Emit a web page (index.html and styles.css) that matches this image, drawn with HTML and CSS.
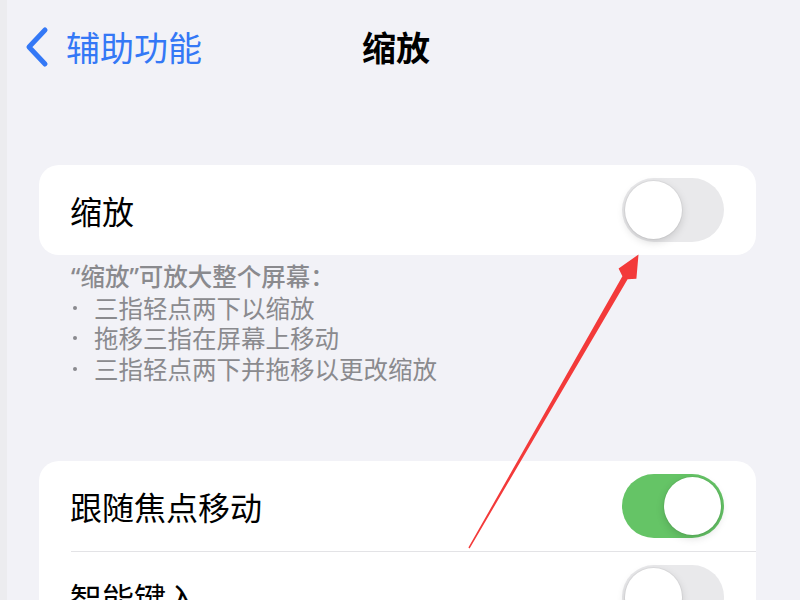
FILE: index.html
```html
<!DOCTYPE html>
<html lang="zh-CN">
<head>
    <meta charset="UTF-8">
    <meta name="viewport" content="width=device-width, initial-scale=1.0">
    <title>缩放</title>
    <link rel="stylesheet" href="styles.css">
</head>
<body>

    <div class="screen">
        <div class="nav">
            <a class="back">
                <svg class="chevron" width="26" height="42" viewBox="0 0 26 42">
                    <path d="M21 4 L5 21 L21 38" fill="none" stroke="#3478f6" stroke-width="5" stroke-linecap="round" stroke-linejoin="round"/>
                </svg>
                <span>辅助功能</span>
            </a>
            <h1 class="title">缩放</h1>
            <div></div>
        </div>

        <div class="card first">
            <div class="row">
                <span class="label">缩放</span>
                <div class="toggle"><div class="knob"></div></div>
            </div>
        </div>

        <div class="footnote">
            <p class="lead">“缩放”可放大整个屏幕：</p>
            <ul class="list">
                <li>三指轻点两下以缩放</li>
                <li>拖移三指在屏幕上移动</li>
                <li>三指轻点两下并拖移以更改缩放</li>
            </ul>
        </div>

        <div class="card second">
            <div class="row">
                <span class="label">跟随焦点移动</span>
                <div class="toggle on"><div class="knob"></div></div>
            </div>
            <div class="divider"></div>
            <div class="row">
                <span class="label">智能键入</span>
                <div class="toggle"><div class="knob"></div></div>
            </div>
        </div>

        <!-- annotation arrow drawn over the screenshot -->
        <svg class="arrow" width="800" height="600" viewBox="0 0 800 600">
            <polygon points="468.4,547.6 622.4,276.3 618.6,268.4 638.5,254.5 636.4,278.7 627.6,279.3 469.6,548.4" fill="#f33a3a"/>
        </svg>
    </div>

</body>
</html>
```

FILE: styles.css
```css
:root {
    --background: #f2f2f7;
    --surface: #ffffff;
    --blue: #3478f6;
    --green: #65c466;
    --track: #e9e9eb;
    --text-dark: #000000;
    --text-muted: #8a8a8e;
    --divider: #e3e3e6;
}

* {
    box-sizing: border-box;
    margin: 0;
    padding: 0;
}

body {
    font-family: "Noto Sans CJK SC", "Noto Sans", sans-serif;
    background-color: var(--background);
    color: var(--text-dark);
    width: 800px;
    height: 600px;
    overflow: hidden;
}

.screen {
    position: relative;
    height: 600px;
    border-left: 7px solid #ececef;
}

.nav {
    height: 94px;
    display: grid;
    grid-template-columns: 1fr auto 1fr;
    align-items: center;
}

.back {
    display: flex;
    align-items: center;
    gap: 16px;
    padding-left: 17px;
    color: var(--blue);
    font-size: 34px;
    line-height: 1;
}

.title {
    font-size: 34px;
    font-weight: 700;
    line-height: 1;
    margin-left: -15px;
}

.card {
    background: var(--surface);
    border-radius: 20px;
    margin: 0 44px 0 32px;
    overflow: hidden;
}

.card.first {
    margin-top: 71px;
}

.card.second {
    margin-top: 77px;
}

.row {
    height: 90px;
    display: flex;
    align-items: center;
    justify-content: space-between;
    padding: 0 32px 0 31px;
}

.label {
    font-size: 32px;
    line-height: 1;
}

.divider {
    height: 1px;
    background: var(--divider);
    margin-left: 32px;
}

.toggle {
    width: 102px;
    height: 64px;
    border-radius: 32px;
    background: var(--track);
    padding: 3px;
    display: flex;
    align-items: center;
}

.toggle.on {
    background: var(--green);
    justify-content: flex-end;
}

.knob {
    width: 57px;
    height: 58px;
    border-radius: 50%;
    background: var(--surface);
    box-shadow: 0 3px 8px rgba(0, 0, 0, 0.15), 0 0 0 1px rgba(0, 0, 0, 0.04);
}

.footnote {
    padding: 7px 0 0 64px;
    font-size: 24.5px;
    line-height: 30.5px;
    color: var(--text-muted);
}

.lead {
    font-family: "Noto Sans", "Noto Sans CJK SC", sans-serif;
    font-weight: 500;
}

.list {
    list-style: none;
}

.list li {
    display: flex;
    align-items: center;
}

.list li::before {
    content: "";
    width: 4px;
    height: 4px;
    border-radius: 50%;
    background: var(--text-muted);
    margin: 0 17px 0 2px;
    flex-shrink: 0;
}

.arrow {
    position: absolute;
    top: 0;
    left: -7px;
    pointer-events: none;
}
```
